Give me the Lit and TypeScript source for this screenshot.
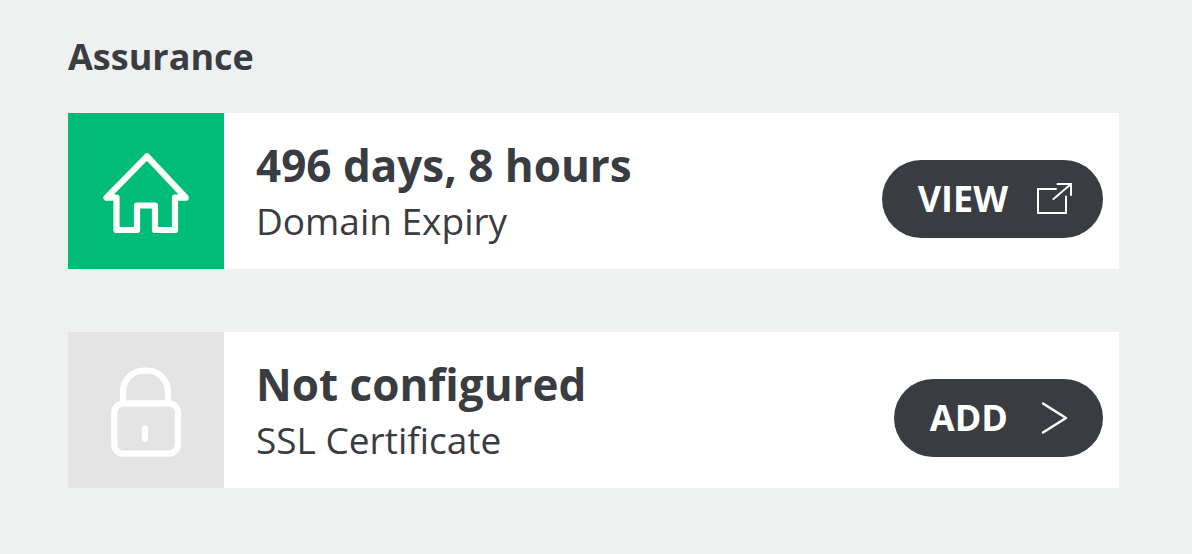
import { LitElement, html, css, svg } from "lit";
import { customElement, property } from "lit/decorators.js";

const homeIcon = svg`<path d="M79 43.3 38.5 84.7H48.5V117H69V92.5H87V117H107V84.7H117.8Z" />`;

const lockIcon = svg`
  <rect x="46.3" y="71.3" width="63.6" height="50.4" rx="9" />
  <path d="M55 71V60C55 48 64 38.6 76 38.6H79C91 38.6 100 48 100 60V71" />
  <path d="M77 96.3V106.7" />`;

const externalIcon = svg`
  <path d="M20 7H2V31H30V14.5" />
  <path d="M17.5 17 35 2" />
  <path d="M21.5 2H35V13" />`;

const chevronIcon = svg`<path d="M7 2.5 30 17 7 31.5" />`;

@customElement("assurance-card")
export class AssuranceCard extends LitElement {
  @property() heading = "";
  @property() label = "";
  @property() kind: "domain" | "certificate" = "domain";

  static styles = css`
    :host {
      display: block;
    }
    .card {
      display: flex;
      background: #fff;
      min-height: 156px;
    }
    .tile {
      flex: none;
      width: 156px;
    }
    .tile.active {
      background: #00bc78;
    }
    .tile.muted {
      background: #e4e4e4;
    }
    .tile svg {
      display: block;
      width: 156px;
      height: 156px;
      fill: none;
      stroke: #fff;
      stroke-width: 6.2;
      stroke-linecap: round;
      stroke-linejoin: round;
    }
    .text {
      flex: 1;
      min-width: 0;
      padding: 24px 32px 0;
    }
    .heading {
      margin: 0;
      font-size: 44px;
      line-height: 56px;
      font-weight: 700;
    }
    .label {
      margin: 0;
      font-size: 37px;
      line-height: 56px;
      font-weight: 400;
    }
    .action {
      box-sizing: border-box;
      flex: none;
      display: flex;
      align-items: center;
      justify-content: space-between;
      gap: 28px;
      align-self: center;
      height: 78px;
      margin: 16px 16px 0 0;
      padding: 0 30px 0 36px;
      border: 0;
      border-radius: 39px;
      background: #393c41;
      color: #fff;
      font: inherit;
      font-size: 36px;
      line-height: 48px;
      font-weight: 700;
      text-decoration: none;
      cursor: pointer;
    }
    .action svg {
      flex: none;
      width: 37px;
      height: 34px;
      fill: none;
      stroke: #fff;
      stroke-width: 2;
      stroke-linecap: round;
    }
    .action .chevron {
      stroke-width: 2.5;
      stroke-linejoin: round;
    }
  `;

  private renderAction() {
    return this.kind === "domain"
      ? html`<a class="action" href="#domain">
          VIEW
          <svg viewBox="0 0 37 34" aria-hidden="true">${externalIcon}</svg>
        </a>`
      : html`<button class="action" type="button">
          ADD
          <svg class="chevron" viewBox="0 0 37 34" aria-hidden="true">${chevronIcon}</svg>
        </button>`;
  }

  render() {
    const domain = this.kind === "domain";
    return html`
      <article class="card">
        <div class="tile ${domain ? "active" : "muted"}">
          <svg viewBox="0 0 156 156" aria-hidden="true">${domain ? homeIcon : lockIcon}</svg>
        </div>
        <div class="text">
          <h2 class="heading">${this.heading}</h2>
          <p class="label">${this.label}</p>
        </div>
        ${this.renderAction()}
      </article>
    `;
  }
}

@customElement("app-root")
export class AppRoot extends LitElement {
  static styles = css`
    :host {
      display: block;
      box-sizing: border-box;
      min-height: 100vh;
      padding: 33px 73px 64px 68px;
      background: #eff1f1;
      color: #393c41;
      font-family: "Open Sans", "Noto Sans", sans-serif;
    }
    .title {
      margin: 0 0 32px;
      font-size: 36px;
      line-height: 48px;
      font-weight: 700;
    }
    .cards {
      display: grid;
      gap: 63px;
    }
  `;

  render() {
    return html`
      <main>
        <h1 class="title">Assurance</h1>
        <div class="cards">
          <assurance-card
            kind="domain"
            heading="496 days, 8 hours"
            label="Domain Expiry"
          ></assurance-card>
          <assurance-card
            kind="certificate"
            heading="Not configured"
            label="SSL Certificate"
          ></assurance-card>
        </div>
      </main>
    `;
  }
}
